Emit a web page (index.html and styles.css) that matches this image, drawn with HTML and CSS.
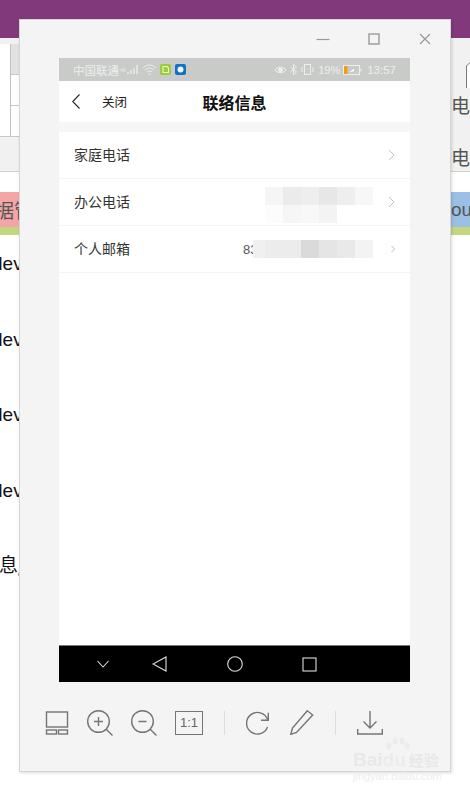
FILE: index.html
```html
<!DOCTYPE html>
<html lang="zh-CN">
<head>
  <meta charset="UTF-8" />
  <title>联络信息</title>
  <link rel="stylesheet" href="styles.css">
</head>
<body>
  <div class="desk">
    <div class="titlebar"></div>
    <div class="sheet">
      <div class="side">
        <div class="ribbon">
          <div class="ribbon-grid">
            <div class="ribbon-main"></div>
            <div class="ribbon-cells">
              <div class="ribbon-cell ribbon-cell-grey"></div>
              <div class="ribbon-cell"></div>
              <div class="ribbon-cell"></div>
            </div>
          </div>
        </div>
        <div class="gap-top"></div>
        <div class="tag tag-red"><span>据管</span></div>
        <div class="tag-line"></div>
        <div class="doc-lines">
          <div class="doc-line">dev</div>
          <div class="doc-line">dev</div>
          <div class="doc-line">dev</div>
          <div class="doc-line">dev</div>
          <div class="doc-line doc-line-cn">息/</div>
        </div>
      </div>
      <div class="side">
        <div class="ribbon ribbon-right">
          <svg class="doc-icon" width="24" height="28" viewBox="0 0 24 28"><path d="M.5 28V6L6 .5L12 6V28" fill="#fff" stroke="#777"/></svg>
          <div class="ribbon-label">电</div>
          <div class="ribbon-label ribbon-label-low">电</div>
        </div>
        <div class="gap-top"></div>
        <div class="tag tag-blue"><span>ou</span></div>
        <div class="tag-line"></div>
      </div>
    </div>

    <div class="viewer">
      <div class="win-buttons">
        <svg width="14" height="14" viewBox="0 0 14 14"><path d="M.5 7.500H13.500" stroke="#999" stroke-width="1.200"/></svg>
        <svg width="14" height="14" viewBox="0 0 14 14"><rect x="2" y="2" width="10" height="10" fill="none" stroke="#999" stroke-width="1.400"/></svg>
        <svg width="14" height="14" viewBox="0 0 14 14"><path d="M2 2L12 12M12 2L2 12" stroke="#999" stroke-width="1.200"/></svg>
      </div>

      <div class="phone">
        <div class="statusbar">
          <div class="status-left">
            <span class="carrier">中国联通</span>
            <span class="net">46</span>
            <svg class="signal" width="11" height="11" viewBox="0 0 11 11"><path d="M1 10V8M4 10V6M7 10V4M10 10V1" stroke="#eee" stroke-width="1.300"/></svg>
            <svg class="wifi" width="15" height="11" viewBox="0 0 15 11" fill="none" stroke="#eee"><path d="M1 4C5 0 10 0 14 4M3 6C6 3.500 9 3.500 12 6M5 8C6.500 6.800 8.500 6.800 10 8M6.500 10H8.500"/></svg>
            <svg class="badge" width="11" height="11" viewBox="0 0 11 11"><rect width="11" height="11" rx="2" fill="#9ccc3c"/><path d="M3 2.500H7L8.500 4V8.500H3Z" fill="none" stroke="#e8f4c8" stroke-width="1.200"/></svg>
            <svg class="badge badge-blue" width="11" height="11" viewBox="0 0 11 11"><rect width="11" height="11" rx="2" fill="#0f72c4"/><circle cx="5.500" cy="5.500" r="3" fill="#eef4fa"/></svg>
          </div>
          <div class="status-right">
            <svg width="13" height="10" viewBox="0 0 13 10" fill="none" stroke="#eee"><path d="M1 5C3 1.500 10 1.500 12 5C10 8.500 3 8.500 1 5Z"/><circle cx="6.500" cy="5" r="2" fill="#eee"/></svg>
            <svg width="7" height="11" viewBox="0 0 7 11" fill="none" stroke="#eee"><path d="M.5 3L6.500 8L3.500 10.500V.5L6.500 3L.5 8"/></svg>
            <svg class="vibrate" width="13" height="11" viewBox="0 0 13 11" fill="none" stroke="#eee"><rect x="3.500" y=".5" width="6" height="10"/><path d="M1 3V8M12 3V8"/></svg>
            <span class="pct">19%</span>
            <svg width="19" height="10" viewBox="0 0 19 10"><rect x=".5" y=".5" width="16" height="9" fill="none" stroke="#eee"/><rect x="1" y="1" width="3.500" height="8" fill="#f59a18"/><path d="M7 7L11 3.500V6L8 7Z" fill="#fff"/><path d="M18 3.500V6.500" stroke="#eee"/></svg>
            <span class="clock">13:57</span>
          </div>
        </div>
        <div class="navbar">
          <svg class="back" width="8" height="15" viewBox="0 0 8 15"><path d="M7.500 .5L.7 7.500L7.500 14.500" fill="none" stroke="#222" stroke-width="1.100"/></svg>
          <span class="close">关闭</span>
          <span class="nav-title">联络信息</span>
        </div>
        <div class="content">
          <div class="row">
            <span class="row-label">家庭电话</span>
            <svg class="chev" width="7" height="12" viewBox="0 0 7 12"><path d="M1 1L6 6L1 11" fill="none" stroke="#c4c4c4"/></svg>
          </div>
          <div class="row">
            <span class="row-label">办公电话</span>
            <div class="blur blur-two">
              <div class="blur-line">
                <i style="background:#f5f5f5"></i><i style="background:#ebebeb"></i><i style="background:#eeeeee"></i><i style="background:#e7e7e7"></i><i style="background:#eeeeee"></i><i style="background:#f7f7f7"></i>
              </div>
              <div class="blur-line">
                <i style="background:#fcfcfc"></i><i style="background:#f6f6f6"></i><i style="background:#f8f8f8"></i><i style="background:#f3f3f3"></i><i style="background:#fff"></i><i style="background:#fff"></i>
              </div>
            </div>
            <svg class="chev" width="7" height="12" viewBox="0 0 7 12"><path d="M1 1L6 6L1 11" fill="none" stroke="#c4c4c4"/></svg>
          </div>
          <div class="row">
            <span class="row-label">个人邮箱</span>
            <div class="blur blur-one">
              <span class="mail">83</span>
              <div class="blur-line">
                <i class="slim" style="background:#f0f0f0"></i><i style="background:#ececec"></i><i style="background:#ececec"></i><i style="background:#dadada"></i><i style="background:#e5e5e5"></i><i style="background:#e9e9e9"></i><i style="background:#f3f3f3"></i>
              </div>
            </div>
            <svg class="chev-small" width="4" height="8" viewBox="0 0 4 8"><path d="M.5 1L3.500 4L.5 7" fill="none" stroke="#bbb"/></svg>
          </div>
        </div>
        <div class="softkeys">
          <svg width="14" height="8" viewBox="0 0 14 8"><path d="M1.500 1L7 7L12.500 1" fill="none" stroke="#ddd" stroke-width="1.100"/></svg>
          <svg class="key-back" width="15" height="16" viewBox="0 0 15 16"><path d="M14 1V15L1 8Z" fill="none" stroke="#ddd" stroke-width="1.100"/></svg>
          <svg class="key-wide" width="16" height="16" viewBox="0 0 16 16"><circle cx="8" cy="8" r="7.300" fill="none" stroke="#ddd" stroke-width="1.100"/></svg>
          <svg class="key-wide" width="15" height="15" viewBox="0 0 15 15"><rect x="1" y="1" width="13" height="13" fill="none" stroke="#ddd" stroke-width="1.100"/></svg>
        </div>
      </div>

      <div class="toolbar">
        <svg width="24" height="24" viewBox="0 0 24 24" fill="none" stroke="#757575" stroke-width="1.400"><rect x="1.500" y="1" width="21" height="15"/><rect x="1.500" y="19" width="10" height="4"/><rect x="13.500" y="19" width="9" height="4"/></svg>
        <svg width="26" height="26" viewBox="0 0 26 26" fill="none" stroke="#757575" stroke-width="1.400"><circle cx="11.500" cy="11.500" r="10.800"/><path d="M19.200 19.200L25.500 25.500M7 11.500H16M11.500 7V16"/></svg>
        <svg width="26" height="26" viewBox="0 0 26 26" fill="none" stroke="#757575" stroke-width="1.400"><circle cx="11.500" cy="11.500" r="10.800"/><path d="M19.200 19.200L25.500 25.500M7.500 11.500H15.500"/></svg>
        <div class="ratio">1:1</div>
        <div class="tool-sep"></div>
        <svg width="24" height="24" viewBox="0 0 24 24" fill="none" stroke="#757575" stroke-width="1.400"><path d="M21.500 16A10.800 10.800 0 1 1 21.500 8.500M22.300 1.700V9.300H15"/></svg>
        <svg class="pencil" width="24" height="25" viewBox="0 0 24 25" fill="none" stroke="#757575" stroke-width="1.400"><path d="M17.300 .7L22.700 5L6.500 22.500L.8 24.300L2.500 18Z"/></svg>
        <div class="tool-sep"></div>
        <svg width="26" height="24" viewBox="0 0 26 24" fill="none" stroke="#757575" stroke-width="1.400"><path d="M13 0V17M6.500 10.500L13 17L19.500 10.500M.7 18V23H25.300V18"/></svg>
      </div>

      <div class="watermark">
        <svg class="paw" width="24" height="14" viewBox="0 0 24 14" fill="#ececec"><ellipse cx="3" cy="9" rx="2.500" ry="3.500"/><ellipse cx="9" cy="4" rx="2.500" ry="3.500"/><ellipse cx="16" cy="4" rx="2.500" ry="3.500"/><ellipse cx="21" cy="9" rx="2.500" ry="3.500"/></svg>
        <div class="wm-main">Bai<span class="wm-du">du</span><span class="wm-cn">经验</span></div>
        <div class="wm-url">jingyan.baidu.com</div>
      </div>
    </div>
  </div>
</body>
</html>
```

FILE: styles.css
```css
* {
  box-sizing: border-box;
}

html, body {
  margin: 0;
  padding: 0;
}

body {
  width: 470px;
  height: 791px;
  overflow: hidden;
  background: #fff;
  font-family: "Noto Sans CJK SC", "Liberation Sans", sans-serif;
}

.desk {
  position: relative;
  width: 470px;
  height: 791px;
  overflow: hidden;
}

.titlebar {
  height: 38px;
  background: #82397c;
}

.sheet {
  display: flex;
  justify-content: space-between;
}

.side {
  width: 24px;
  background: #fff;
}

.ribbon {
  height: 134px;
  padding-top: 6px;
  background: #f1f1f1;
  border-bottom: 1px solid #cfcfcf;
}

.ribbon-grid {
  display: flex;
  height: 93px;
  background: #fff;
  border-bottom: 1px solid #c8c8c8;
}

.ribbon-main {
  width: 11px;
  border-right: 1px solid #c0c0c0;
}

.ribbon-cells {
  flex: 1;
}

.ribbon-cell {
  height: 31px;
  border-bottom: 1px solid #c8c8c8;
}

.ribbon-cell:last-child {
  border-bottom: 0;
}

.ribbon-cell-grey {
  background: #e2e2e2;
}

.gap-top {
  height: 20px;
}

.tag {
  height: 35px;
  overflow: hidden;
  font-size: 19px;
  line-height: 35px;
  color: #555;
  white-space: nowrap;
}

.tag-red {
  background: #f4a6a6;
  text-indent: -5px;
}

.tag-blue {
  background: #9cc0e4;
  padding-left: 5px;
  font-family: "Liberation Sans", sans-serif;
}

.tag-line {
  height: 8px;
  background: #c3d87e;
}

.doc-lines {
  padding-top: 16px;
}

.doc-line {
  height: 75.500px;
  font-family: "Liberation Sans", sans-serif;
  font-size: 19px;
  line-height: 26px;
  color: #111;
  white-space: nowrap;
  overflow: hidden;
  text-indent: -8px;
}

.doc-line-cn {
  font-family: "Noto Sans CJK SC", sans-serif;
  line-height: 22px;
  text-indent: -1px;
}

.ribbon-right {
  position: relative;
  overflow: hidden;
}

.doc-icon {
  position: absolute;
  left: 20px;
  top: 22px;
}

.ribbon-label {
  position: absolute;
  left: 5px;
  top: 55px;
  font-size: 19px;
  line-height: 24px;
  color: #555;
}

.ribbon-label-low {
  top: 107px;
}

.viewer {
  position: absolute;
  left: 19px;
  top: 19px;
  width: 432px;
  height: 753px;
  background: #f4f4f4;
  border: 1px solid #d6d6d6;
  box-shadow: 1px 1px 3px rgba(0, 0, 0, 0.15);
  display: flex;
  flex-direction: column;
}

.win-buttons {
  height: 38px;
  display: flex;
  justify-content: flex-end;
  align-items: center;
  gap: 37px;
  padding: 0 18px 0 0;
}

.phone {
  width: 351px;
  height: 624px;
  margin-left: 39px;
  background: #fff;
  display: flex;
  flex-direction: column;
}

.statusbar {
  height: 23px;
  background: #c9cbc9;
  display: flex;
  justify-content: space-between;
  align-items: center;
  padding: 0 14px;
  color: #eee;
  font-size: 11px;
}

.status-left, .status-right {
  display: flex;
  align-items: center;
}

.status-right {
  gap: 3px;
}

.carrier {
  font-size: 11.500px;
}

.net {
  width: 8px;
  font-size: 5px;
  align-self: flex-start;
  margin-top: 4px;
  text-align: center;
}

.wifi {
  margin-left: 4px;
}

.badge {
  margin-left: 3px;
}

.badge-blue {
  margin-left: 4px;
}

.vibrate {
  margin-left: 1px;
}

.pct {
  margin-left: 1px;
  font-family: "Liberation Sans", sans-serif;
  font-size: 11px;
}

.clock {
  margin-left: 2px;
  font-family: "Liberation Sans", sans-serif;
  font-size: 11.500px;
}

.navbar {
  position: relative;
  height: 41px;
  display: flex;
  align-items: center;
  padding-left: 13px;
  flex: none;
}

.close {
  margin-left: 22px;
  font-size: 12.500px;
  color: #222;
}

.nav-title {
  position: absolute;
  left: 0;
  right: 0;
  text-align: center;
  font-size: 16px;
  font-weight: 700;
  color: #111;
}

.content {
  flex: 1;
  border-top: 10px solid #f6f6f6;
}

.row {
  height: 47px;
  display: flex;
  align-items: center;
  padding: 0 15px;
  border-bottom: 1px solid #f3f3f3;
}

.row-label {
  margin-bottom: 2px;
  font-size: 14px;
  color: #333;
}

.chev {
  margin-left: auto;
}

.chev-small {
  flex: none;
}

.blur {
  margin-left: auto;
  display: flex;
}

.blur-two {
  flex-direction: column;
  margin-top: 6px;
  margin-right: 15px;
}

.blur-two + .chev {
  margin-left: 0;
}

.blur-one {
  margin-right: 18px;
  align-items: center;
}

.blur-line {
  display: flex;
}

.blur-line i {
  display: block;
  width: 18px;
  height: 18px;
}

.blur-line i.slim {
  width: 12px;
}

.mail {
  width: 10px;
  overflow: hidden;
  font-family: "Liberation Sans", sans-serif;
  font-size: 13px;
  color: #555;
  white-space: nowrap;
}

.softkeys {
  flex: none;
  height: 37px;
  background: #000;
  border-top: 1px solid #777;
  display: flex;
  align-items: center;
  padding-left: 37px;
}

.key-back {
  margin-left: 42px;
}

.key-wide {
  margin-left: 59.500px;
}

.toolbar {
  flex: 1;
  display: flex;
  align-items: center;
  gap: 18px;
  padding: 0 0 8px 25px;
}

.ratio {
  width: 28px;
  height: 24px;
  border: 1.500px solid #757575;
  font-family: "Liberation Sans", sans-serif;
  font-size: 13px;
  line-height: 21px;
  text-align: center;
  color: #666;
}

.tool-sep {
  width: 1px;
  height: 24px;
  background: #ddd;
  margin: 0 3px;
}

.pencil {
  margin-left: 2px;
}

.watermark {
  position: absolute;
  left: 333px;
  top: 730px;
  color: #e8e8e8;
  white-space: nowrap;
  font-family: "Liberation Sans", sans-serif;
}

.paw {
  position: absolute;
  left: 33px;
  top: -13px;
}

.wm-main {
  font-size: 19px;
  font-weight: 700;
  line-height: 19px;
}

.wm-du {
  color: #ececec;
}

.wm-cn {
  font-family: "Noto Sans CJK SC", sans-serif;
  font-size: 15px;
  margin-left: 3px;
}

.wm-url {
  margin-top: 2px;
  font-size: 11px;
  line-height: 11px;
  color: #eeeeee;
}
```
